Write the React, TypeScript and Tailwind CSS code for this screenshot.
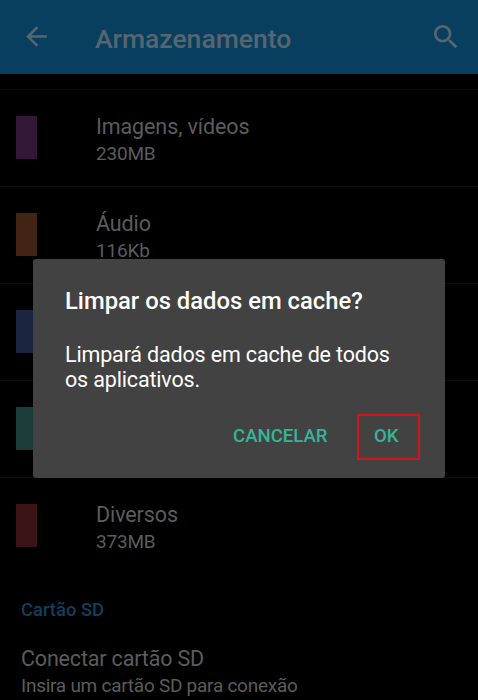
import React from "react";

const rows = [
  { title: "Imagens, vídeos", size: "230MB", color: "bg-[#321736]" },
  { title: "Áudio", size: "116Kb", color: "bg-[#412413]" },
  { title: "", size: "", color: "bg-[#1c2540]" },
  { title: "", size: "", color: "bg-[#1a3d3a]" },
  { title: "Diversos", size: "373MB", color: "bg-[#3c1417]" },
];

export default function App() {
  return (
    <div className="relative h-[700px] w-[478px] overflow-hidden bg-black font-['Roboto',sans-serif] text-[#5c5c5c]">
      <header className="flex h-[74px] items-center bg-[#083f5e] text-[#566570]">
        <svg className="-mt-px ml-[21px] h-[31px] w-[31px]" viewBox="0 0 24 24" fill="currentColor">
          <path d="M20 11H7.83l5.59-5.59L12 4l-8 8 8 8 1.41-1.41L7.83 13H20v-2z" />
        </svg>
        <h1 className="ml-[43px] mt-[4px] flex-1 text-[26.5px] font-medium leading-8">Armazenamento</h1>
        <svg className="-mt-px mr-[16px] h-[32px] w-[32px]" viewBox="0 0 24 24" fill="currentColor">
          <path d="M15.5 14h-.79l-.28-.27C15.41 12.59 16 11.11 16 9.5 16 5.91 13.09 3 9.5 3S3 5.91 3 9.5 5.91 16 9.5 16c1.61 0 3.09-.59 4.23-1.57l.27.28v.79l5 4.99L20.49 19l-4.99-5zm-6 0C7.01 14 5 11.99 5 9.5S7.01 5 9.5 5 14 7.01 14 9.5 11.99 14 9.5 14z" />
        </svg>
      </header>
      <main className="pt-[15px]">
        {rows.map((r, i) => (
          <div key={i} className="flex h-[97px] border-t border-[#0c0c0c] pl-4 pt-[26px]">
            <div className={"h-[43px] w-[21px] " + r.color} />
            <div className="ml-[59px]">
              <p className="-mt-[3px] text-[21.5px] leading-[27px] tracking-[-0.1px]">{r.title}</p>
              <p className="text-[19px] leading-[27px] tracking-[-0.2px]">{r.size}</p>
            </div>
          </div>
        ))}
        <section className="pl-[21px]">
          <h2 className="mt-[24px] text-[18.4px] font-medium leading-6 text-[#123f5e]">Cartão SD</h2>
          <p className="mt-[23px] text-[21.5px] leading-[27px] tracking-[-0.17px]">Conectar cartão SD</p>
          <p className="text-[19px] leading-[28px] tracking-[-0.26px]">Insira um cartão SD para conexão</p>
        </section>
      </main>
      <div className="absolute left-[33px] top-[259px] h-[219px] w-[412px] rounded-[3px] bg-[#424242] pl-8 pt-[28px] text-white">
        <h2 className="text-[23.8px] font-medium leading-[28px]">Limpar os dados em cache?</h2>
        <p className="mt-[27px] text-[21.5px] leading-[25px] tracking-[-0.16px]">
          Limpará dados em cache de todos
          <br />
          os aplicativos.
        </p>
        <div className="mt-[22px] flex items-center text-[18.6px] font-medium text-[#35b598]">
          <button className="ml-[168px] w-[96px] text-left">CANCELAR</button>
          <button className="ml-[28px] flex h-[46px] w-[63px] items-center border-2 border-[#d0151b] pl-[15px]">OK</button>
        </div>
      </div>
    </div>
  );
}
